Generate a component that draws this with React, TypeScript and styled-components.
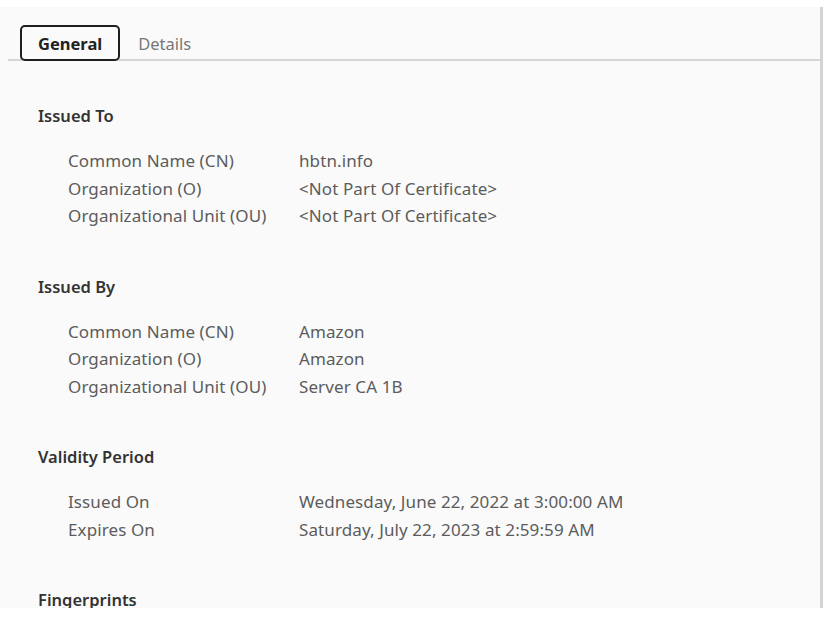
import React from "react";
import styled, { createGlobalStyle } from "styled-components";

const Global = createGlobalStyle`
  html, body { margin: 0; padding: 0; background: #ffffff; }
  body { font-family: "Noto Sans", "Open Sans", sans-serif; }
`;

const Panel = styled.div`
  margin-top: 7px;
  width: 823px;
  height: 601px;
  background: #fafafa;
  border-right: 3px solid #d4d4d4;
  box-sizing: border-box;
  overflow: hidden;
`;

const TabBar = styled.div`
  margin-left: 8px;
  padding: 18px 0 0 12px;
  display: flex;
  align-items: flex-end;
  gap: 14px;
  border-bottom: 2px solid #d6d6d6;
  height: 34px;
`;

const Tab = styled.div<{ $active?: boolean }>`
  box-sizing: border-box;
  height: 36px;
  margin-bottom: -2px;
  display: flex;
  align-items: center;
  font-size: 16.5px;
  font-weight: ${(p) => (p.$active ? 700 : 400)};
  color: ${(p) => (p.$active ? "#222" : "#777")};
  border: 2px solid ${(p) => (p.$active ? "#1e1e1e" : "transparent")};
  border-radius: 5px;
  padding: ${(p) => (p.$active ? "0 16px" : "0 2px")};
`;

const Content = styled.div`
  padding: 45px 0 0 38px;
  display: flex;
  flex-direction: column;
  gap: 47px;
`;

const Section = styled.section`
  display: flex;
  flex-direction: column;
  gap: 21px;
`;

const SectionTitle = styled.div`
  font-size: 16.5px;
  font-weight: 600;
  color: #333;
  line-height: 20px;
`;

const Rows = styled.div`
  padding-left: 30px;
  display: grid;
  grid-template-columns: 231px auto;
  line-height: 27.5px;
  font-size: 17px;
  letter-spacing: 0.1px;
  color: #5c5c5c;
`;

const Cell = styled.div`
  white-space: nowrap;
`;

type Sec = { title: string; rows: [string, string][] };

const sections: Sec[] = [
  {
    title: "Issued To",
    rows: [
      ["Common Name (CN)", "hbtn.info"],
      ["Organization (O)", "<Not Part Of Certificate>"],
      ["Organizational Unit (OU)", "<Not Part Of Certificate>"],
    ],
  },
  {
    title: "Issued By",
    rows: [
      ["Common Name (CN)", "Amazon"],
      ["Organization (O)", "Amazon"],
      ["Organizational Unit (OU)", "Server CA 1B"],
    ],
  },
  {
    title: "Validity Period",
    rows: [
      ["Issued On", "Wednesday, June 22, 2022 at 3:00:00 AM"],
      ["Expires On", "Saturday, July 22, 2023 at 2:59:59 AM"],
    ],
  },
  { title: "Fingerprints", rows: [] },
];

export default function App() {
  return (
    <>
      <Global />
      <Panel>
        <TabBar>
          <Tab $active>General</Tab>
          <Tab>Details</Tab>
        </TabBar>
        <Content>
          {sections.map((s) => (
            <Section key={s.title}>
              <SectionTitle>{s.title}</SectionTitle>
              {s.rows.length > 0 && (
                <Rows>
                  {s.rows.map(([k, v]) => (
                    <React.Fragment key={k}>
                      <Cell>{k}</Cell>
                      <Cell>{v}</Cell>
                    </React.Fragment>
                  ))}
                </Rows>
              )}
            </Section>
          ))}
        </Content>
      </Panel>
    </>
  );
}
